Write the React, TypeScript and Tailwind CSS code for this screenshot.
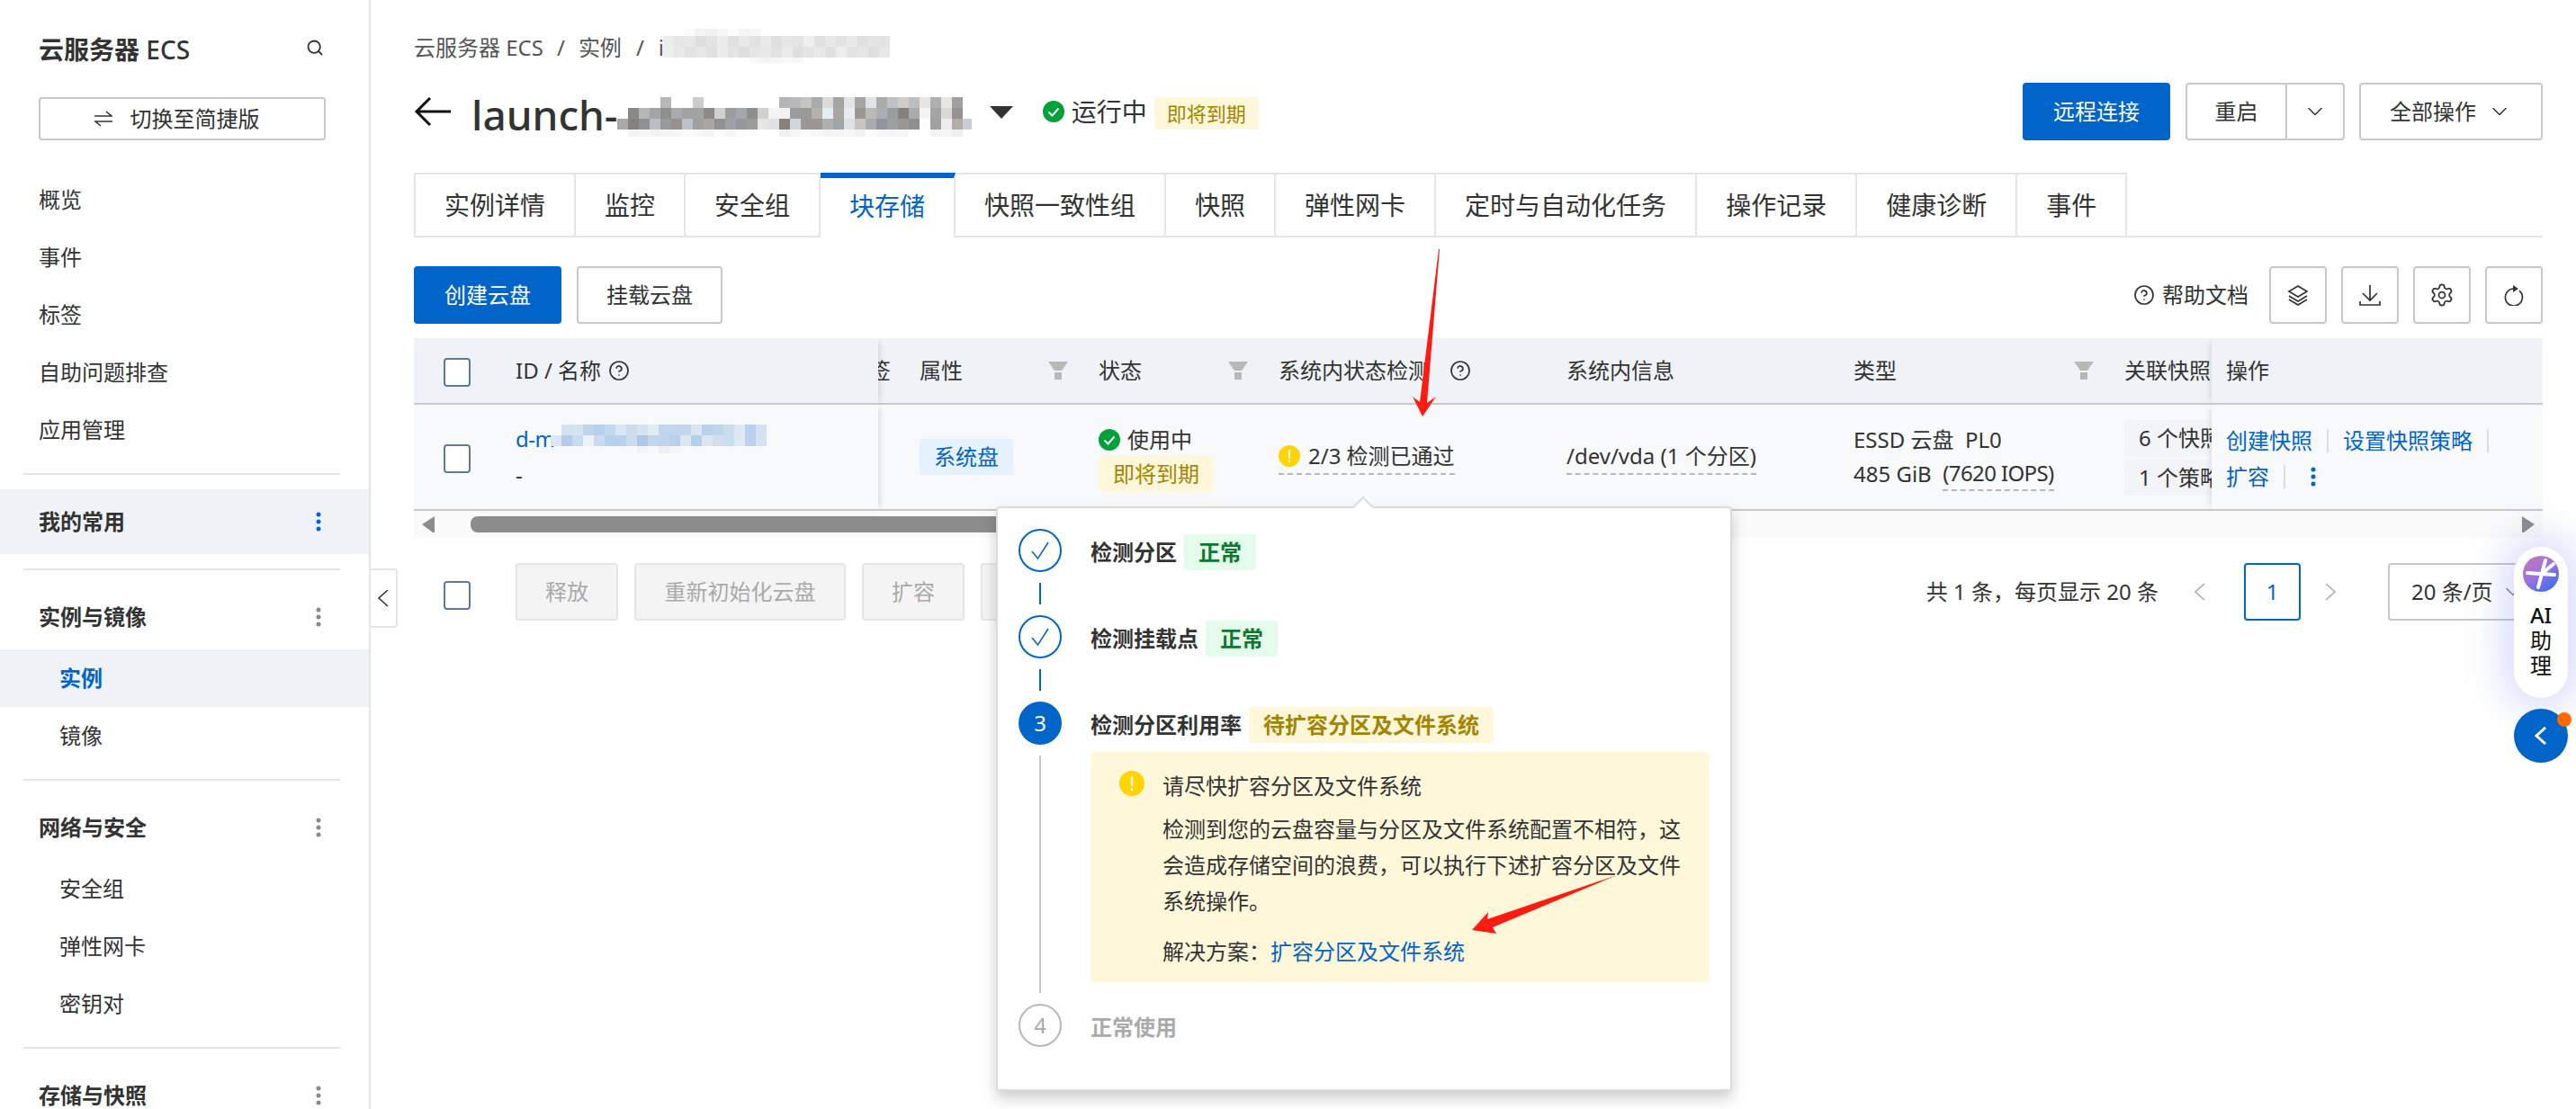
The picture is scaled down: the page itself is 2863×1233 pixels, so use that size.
import { ChevronDown, CircleHelp, Search, Settings } from "lucide-react";

type MosaicRow = { x: number; y: number; h?: number; colors: string[] };

const nav = ["概览", "事件", "标签", "自助问题排查", "应用管理"];
const tabs = ["实例详情", "监控", "安全组", "块存储", "快照一致性组", "快照", "弹性网卡", "定时与自动化任务", "操作记录", "健康诊断", "事件"];

const titleMosaic: MosaicRow[] = [
  { x: 52, y: 8, colors: ["#b8b8b8"] },
  { x: 88, y: 8, colors: ["#cccccc"] },
  { x: 184, y: 8, colors: ["#b4b4b4", "#b8b9ba", "#c6c5c2", "#a8aaac", "#dcdad8", "#a4a4a4", "#e4e4e6", "#a6a5a3", "#dfe4e8", "#acaaa8", "#bfc1c3", "#cfccc9", "#bcbec0", "#e6e6e6", "#adb0b2", "#e8e6e0", "#9f9f9f"] },
  { x: 16, y: 20, colors: ["#888888", "#b8b6b4", "#a2a4a6", "#8f8f8d", "#a8aab0", "#a3a3a3", "#a3a3a1", "#8a8a88", "#d2d0cc", "#9a9c9e", "#a2a8ac", "#8e8e8a", "#cfd1d3", "#f2f3f3", "#f3f2f2", "#9a9da0", "#9a9a9a", "#b4b0aa", "#e6ecf5", "#a9a7a3", "#e8ecf2", "#9b9792", "#bbb9b6", "#a9adb5", "#9b9c9d", "#848280", "#a9abad", "#f3f3f1", "#a3a4a5", "#dcd8d3", "#929496"] },
  { x: 4, y: 32, colors: ["#aaa8a5", "#85807c", "#8f9092", "#bbbfc3", "#979a9c", "#97928f", "#bcc2c9", "#9fa09f", "#aba6a0", "#929292", "#9da0a8", "#96999c", "#9a9c9a", "#e8e6e4", "#dfe1e4", "#86827e", "#d0d6da", "#9a9896", "#999896", "#b1afad", "#9ea5ab", "#e0e0e0", "#c8c5c0", "#a8aaad", "#9095a0", "#9ca0a4", "#9a9896", "#8f8f8f", "#fbfcfc", "#9fa09f", "#ededed", "#b1aeaa", "#c8ccd4"] },
  { x: 16, y: 44, h: 8, colors: ["#f3f3f3", "#f7f7f7", "#f2f2f2", "#f4f4f4", "#f6f6f6", "#fbfbfb", "#f8f8f8", "#f4f4f4", "#fcfcfc", "#f7f7f7", "#fbfbfb", "#fcfcfc", "#ffffff", "#ffffff", "#f0f0f0", "#f6f6f6", "#f9f9f9", "#f8f8f8", "#f3f3f3", "#f5f5f5", "#f6f6f6", "#f2f2f2", "#fcfcfc", "#f7f7f7", "#f5f5f5", "#f7f7f7", "#ffffff", "#ffffff", "#f2f2f2", "#f5f5f5", "#efefef"] },
];

const idMosaic: MosaicRow[] = [
  { x: 12, y: 0, colors: ["#d4e2f0", "#d6e4f2", "#c0d5ec", "#b8d0ea", "#c2d8ee", "#d9e6f3", "#cbdded", "#d6e4f1", "#e1eaf3", "#c1d6ec", "#c0d6ed", "#c2d7ec", "#d9e5f2", "#bbd2ea", "#bfd5ec", "#cbdded", "#dee8f3", "#b9d1eb", "#d3e2f1"] },
  { x: 0, y: 12, colors: ["#d9e6f3", "#b3cde9", "#c8dbef", "#e9f3fa", "#cbdaf0", "#b6d1ec", "#b5d0ea", "#cbdded", "#aec9e7", "#c1d6ec", "#bfd5ec", "#b8d0ea", "#dde7f2", "#b4cfea", "#dce6f2", "#d3ddee", "#c9ddf0", "#dfe8f3", "#bcd2ec", "#d4e2f1"] },
  { x: 96, y: 24, h: 8, colors: ["#f0f3f7", "#f8f9fb", "#ebf0f6", "#f3f6f8"] },
];

const crumbMosaic: MosaicRow[] = [
  { x: 24, y: 0, h: 8, colors: ["#fafafa", "#f3f3f3", "#f0f0f0", "#f6f6f6", "#fbfbfb", "#f5f5f5", "#f7f7f7"] },
  { x: 0, y: 8, colors: ["#ececec", "#e6e6e6", "#e9e9e9", "#dedede", "#e3e3e3", "#ebebeb", "#e0e0e0", "#e8e8e8", "#e2e2e2", "#eaeaea", "#dfdfdf", "#e6e6e6", "#e4e4e4", "#eeeeee", "#e1e1e1", "#e7e7e7", "#e3e3e3", "#e9e9e9", "#e0e0e0", "#e5e5e5", "#e3e3e3"] },
  { x: 0, y: 20, colors: ["#eeeeee", "#e9e9e9", "#e2e2e2", "#e7e7e7", "#e0e0e0", "#ececec", "#e4e4e4", "#dddddd", "#e6e6e6", "#e8e8e8", "#e2e2e2", "#ebebeb", "#dfdfdf", "#e5e5e5", "#e9e9e9", "#e1e1e1", "#ededed", "#e3e3e3", "#e6e6e6", "#dedede", "#e8e8e8"] },
  { x: 96, y: 32, h: 6, colors: ["#f8f8f8", "#f4f4f4", "#f6f6f6", "#f9f9f9", "#f7f7f7"] },
];

const Mosaic = ({ rows, width, height }: { rows: MosaicRow[]; width: number; height: number }) => (
  <svg width={width} height={height} viewBox={`0 0 ${width} ${height}`} className="shrink-0">
    {rows.map((row) =>
      row.colors.map((c, i) => <rect key={`${row.y}-${row.x}-${i}`} x={row.x + i * 12} y={row.y} width="12" height={row.h ?? 12} fill={c} />)
    )}
  </svg>
);

const Dots = ({ color }: { color: string }) => (
  <svg width="6" height="22" viewBox="0 0 6 22" fill={color}>
    <circle cx="3" cy="3" r="2.5" />
    <circle cx="3" cy="11" r="2.5" />
    <circle cx="3" cy="19" r="2.5" />
  </svg>
);

// thin angle used by the sidebar handle, the pager and the round button
const Angle = ({ dir, color, stroke = 1.6 }: { dir: "left" | "right"; color: string; stroke?: number }) => (
  <svg width="14" height="20" viewBox="0 0 14 20" fill="none" stroke={color} strokeWidth={stroke} className="shrink-0">
    <path d={dir === "left" ? "M12 1L2 10L12 19" : "M2 1L12 10L2 19"} />
  </svg>
);

const Sep = () => <div className="my-4 ml-[26px] h-[2px] w-[352px] bg-[#e5e5e5]" />;

const Group = ({ title, items, active, hl }: { title: string; items?: string[]; active?: string; hl?: boolean }) => (
  <div>
    <div className={`flex h-[72px] items-center justify-between pl-[43px] pr-[53px] font-bold ${hl ? "bg-[#eff3f8]" : ""}`}>
      <span>{title}</span>
      <Dots color={hl ? "#0064c8" : "#8a8a8a"} />
    </div>
    {items?.map((it) => (
      <div key={it} className={`flex h-16 items-center pl-[66px] ${it === active ? "bg-[#eff3f8] font-bold text-[#0064c8]" : ""}`}>
        {it}
      </div>
    ))}
  </div>
);

const Sidebar = () => (
  <aside className="h-full w-[412px] shrink-0 overflow-hidden border-r-2 border-[#e5e5e5] pt-[19px] text-[24px] text-[#333]">
    <div className="flex h-[72px] items-center justify-between pl-[43px] pr-[50px]">
      <span className="text-[28px] font-bold">云服务器 <span className="font-medium">ECS</span></span>
      <Search size={20} strokeWidth={2.2} className="-mt-[4px]" />
    </div>
    <div className="ml-[43px] mt-[17px] flex h-12 w-[319px] items-center justify-center gap-5 rounded border-2 border-[#c8c8c8] pr-3">
      <svg width="20" height="18" viewBox="0 0 20 18" fill="none" stroke="#333" strokeWidth="1.6">
        <path d="M0 6H19L13 1" />
        <path d="M20 12H1L7 17" />
      </svg>
      切换至简捷版
    </div>
    <div className="mt-[34px]">
      {nav.map((n) => (
        <div key={n} className="flex h-16 items-center pl-[43px]">{n}</div>
      ))}
    </div>
    <Sep />
    <Group title="我的常用" hl />
    <Sep />
    <Group title="实例与镜像" items={["实例", "镜像"]} active="实例" />
    <Sep />
    <Group title="网络与安全" items={["安全组", "弹性网卡", "密钥对"]} />
    <Sep />
    <Group title="存储与快照" />
  </aside>
);

const OkIcon = () => (
  <svg width="24" height="24" viewBox="0 0 24 24" className="shrink-0">
    <circle cx="12" cy="12" r="12" fill="#00a13a" />
    <path d="M6.5 12.5L10.5 16.5L17.5 8.5" fill="none" stroke="#fff" strokeWidth="2" />
  </svg>
);

const WarnIcon = ({ size }: { size: number }) => (
  <svg width={size} height={size} viewBox="0 0 24 24" className="shrink-0">
    <circle cx="12" cy="12" r="12" fill="#ffd400" />
    <rect x="11" y="5" width="2" height="9.5" fill="#fff" />
    <rect x="11" y="16.5" width="2" height="2.5" fill="#fff" />
  </svg>
);

const Filter = () => (
  <svg width="22" height="20" viewBox="0 0 22 20" fill="#b8b8b8" className="shrink-0">
    <path d="M0 0H22L15 10H7Z" />
    <rect x="7" y="12" width="8" height="8" />
  </svg>
);

const Checkbox = ({ className }: { className?: string }) => (
  <div className={`h-8 w-[30px] shrink-0 rounded border-2 border-[#5b7a9d] bg-white ${className ?? ""}`} />
);

const HeadCell = ({ children, filter }: { children: React.ReactNode; filter?: boolean }) => (
  <div className="flex h-[74px] items-center whitespace-nowrap border-b-2 border-[#c8c8c8] bg-[#eff3f8] pl-4">
    <span>{children}</span>
    {filter && <span className="ml-auto mr-[18px]"><Filter /></span>}
  </div>
);

const BodyCell = ({ className, children }: { className?: string; children?: React.ReactNode }) => (
  <div className={`h-[118px] border-b-2 border-[#c8c8c8] bg-[#f7f9fb] pl-4 ${className ?? ""}`}>{children}</div>
);

const Divider = () => <span className="inline-block h-[26px] w-[2px] bg-[#dcdcdc]" />;

const Table = () => (
  <div className="mt-4">
    <div className="grid grid-cols-[516px_30px_199px_200px_320px_319px_301px_113px_368px] text-[24px] text-[#333]">
      <div className="relative z-10 flex h-[74px] items-center border-b-2 border-[#c8c8c8] bg-[#eff3f8] pl-[33px] shadow-[6px_0_6px_-4px_rgba(0,0,0,0.12)]">
        <Checkbox className="mt-1" />
        <span className="ml-[50px] flex items-center gap-2">ID / 名称 <CircleHelp size={24} strokeWidth={1.7} /></span>
      </div>
      <div className="flex h-[74px] items-center justify-end overflow-hidden border-b-2 border-[#c8c8c8] bg-[#eff3f8] pr-[16px]">
        <span className="whitespace-nowrap">标签</span>
      </div>
      <HeadCell filter>属性</HeadCell>
      <HeadCell filter>状态</HeadCell>
      <HeadCell>
        <span className="flex items-center gap-[22px]">系统内状态检测 <CircleHelp size={24} strokeWidth={1.7} /></span>
      </HeadCell>
      <HeadCell>系统内信息</HeadCell>
      <HeadCell filter>类型</HeadCell>
      <div className="h-[74px] overflow-hidden"><HeadCell>关联快照</HeadCell></div>
      <div className="relative z-10 flex h-[74px] items-center border-b-2 border-[#c8c8c8] bg-[#eff3f8] pl-4 shadow-[-6px_0_6px_-4px_rgba(0,0,0,0.1)]">操作</div>

      <div className="relative z-10 flex h-[118px] items-center border-b-2 border-[#c8c8c8] bg-[#f7f9fb] pl-[33px] shadow-[6px_0_6px_-4px_rgba(0,0,0,0.12)]">
        <Checkbox className="mt-1" />
        <div className="ml-[50px]">
          <div className="flex h-10 items-center text-[#0064c8]">
            <span className="w-[39px] shrink-0 whitespace-nowrap tracking-[-0.5px]">d-m</span>
            <Mosaic rows={idMosaic} width={240} height={32} />
          </div>
          <div className="flex h-10 items-center">-</div>
        </div>
      </div>
      <BodyCell />
      <BodyCell className="flex items-center">
        <span className="flex h-10 items-center rounded bg-[#e6f2fd] px-4 text-[#0064c8]">系统盘</span>
      </BodyCell>
      <BodyCell className="pt-[27px]">
        <div className="flex h-6 items-center gap-2"><OkIcon />使用中</div>
        <span className="mt-[6px] flex h-10 w-fit items-center rounded bg-[#fff7d9] px-4 text-[#a58400]">即将到期</span>
      </BodyCell>
      <BodyCell className="flex items-center">
        <span className="flex h-10 items-center gap-[9px] whitespace-nowrap border-b-2 border-dashed border-[#b8b8b8]"><WarnIcon size={24} />2/3 检测已通过</span>
      </BodyCell>
      <BodyCell className="flex items-center">
        <span className="flex h-10 items-center whitespace-nowrap border-b-2 border-dashed border-[#b8b8b8]">/dev/vda (1 个分区)</span>
      </BodyCell>
      <BodyCell className="pt-5">
        <div className="flex h-[38px] items-center whitespace-pre">ESSD 云盘  PL0</div>
        <div className="flex h-[38px] items-center whitespace-pre">485 GiB  <span className="flex h-[38px] items-center border-b-2 border-dashed border-[#b8b8b8] tracking-[-0.6px]">(7620 IOPS)</span></div>
      </BodyCell>
      <BodyCell className="overflow-hidden pt-[17px]">
        <div className="flex h-10 w-[140px] items-center rounded bg-[#f2f4f7] px-4 whitespace-nowrap">6 个快照</div>
        <div className="mt-1 flex h-10 w-[140px] items-center rounded bg-[#f2f4f7] px-4 whitespace-nowrap">1 个策略</div>
      </BodyCell>
      <div className="relative z-10 h-[118px] border-b-2 border-[#c8c8c8] bg-[#f7f9fb] pl-4 pt-5 text-[#0064c8] shadow-[-6px_0_6px_-4px_rgba(0,0,0,0.1)]">
        <div className="flex h-10 items-center gap-4">创建快照 <Divider /> 设置快照策略 <Divider /></div>
        <div className="flex h-10 items-center gap-4">扩容 <Divider /><span className="ml-3"><Dots color="#0064c8" /></span></div>
      </div>
    </div>
    <div className="flex h-[30px] items-center bg-[#fafafa] px-[9px]">
      <svg width="14" height="18" viewBox="0 0 14 18" fill="#8c8c8c"><path d="M14 0V18H12L0 9Z" /></svg>
      <div className="ml-[40px] h-[18px] w-[900px] rounded-l-lg bg-[#8c8c8c]" />
      <svg width="14" height="18" viewBox="0 0 14 18" fill="#8c8c8c" className="ml-auto"><path d="M0 0V18H2L14 9Z" /></svg>
    </div>
  </div>
);

const BatchBtn = ({ children, width }: { children?: React.ReactNode; width: string }) => (
  <div className={`flex h-16 items-center justify-center rounded border-2 border-[#e5e5e5] bg-[#f4f4f4] text-[#aaa] ${width}`}>{children}</div>
);

const IconBtn = ({ children }: { children: React.ReactNode }) => (
  <div className="flex h-16 w-16 items-center justify-center rounded border-2 border-[#c8c8c8]">{children}</div>
);

const OutlineBtn = ({ children, className }: { children: React.ReactNode; className?: string }) => (
  <div className={`flex h-16 items-center justify-center rounded border-2 border-[#c8c8c8] ${className ?? ""}`}>{children}</div>
);

const StepDone = () => (
  <div className="flex h-12 w-12 items-center justify-center rounded-full border-2 border-[#0064c8]">
    <svg width="24" height="24" viewBox="0 0 24 24" fill="none" stroke="#0064c8" strokeWidth="1.5"><path d="M3 13L9.5 21L21 3" /></svg>
  </div>
);

const Tag = ({ children, tone }: { children: React.ReactNode; tone: "green" | "yellow" }) => (
  <span className={`ml-2 flex h-10 items-center rounded px-4 font-bold ${tone === "green" ? "bg-[#e5fbec] text-[#0a7a2f]" : "bg-[#fff7d9] text-[#a58400]"}`}>{children}</span>
);

const Popover = () => (
  <div className="absolute left-[1107px] top-[563px] z-30 h-[650px] w-[818px] rounded-sm border-2 border-[#dcdcdc] bg-white pl-[23px] pt-[23px] text-[24px] text-[#333] shadow-[0_8px_16px_rgba(0,0,0,0.2)]">
    <div className="absolute -top-[10px] left-[398px] h-4 w-4 rotate-45 border-l-2 border-t-2 border-[#dcdcdc] bg-white" />
    <div className="flex gap-8 pb-3">
      <div className="flex w-12 flex-col items-center"><StepDone /><div className="mt-3 h-6 w-[2px] bg-[#0064c8]" /></div>
      <div className="mt-[2px] flex h-12 items-center font-bold">检测分区<Tag tone="green">正常</Tag></div>
    </div>
    <div className="flex gap-8 pb-3">
      <div className="flex w-12 flex-col items-center"><StepDone /><div className="mt-3 h-6 w-[2px] bg-[#0064c8]" /></div>
      <div className="mt-[2px] flex h-12 items-center font-bold">检测挂载点<Tag tone="green">正常</Tag></div>
    </div>
    <div className="flex gap-8">
      <div className="flex w-12 flex-col items-center">
        <div className="flex h-12 w-12 items-center justify-center rounded-full bg-[#0064c8] text-white">3</div>
        <div className="my-3 w-[2px] flex-1 bg-[#c8c8c8]" />
      </div>
      <div className="pb-6">
        <div className="mt-[2px] flex h-12 items-center font-bold">检测分区利用率<Tag tone="yellow">待扩容分区及文件系统</Tag></div>
        <div className="mt-[6px] flex h-[256px] w-[688px] gap-5 rounded bg-[#fff7d9] pl-8 pr-[30px] pt-[18px] leading-10">
          <div className="mt-[3px]"><WarnIcon size={28} /></div>
          <div>
            <div>请尽快扩容分区及文件系统</div>
            <p className="mt-2">检测到您的云盘容量与分区及文件系统配置不相符，这会造成存储空间的浪费，可以执行下述扩容分区及文件系统操作。</p>
            <div className="mt-4">解决方案：<span className="text-[#0064c8]">扩容分区及文件系统</span></div>
          </div>
        </div>
      </div>
    </div>
    <div className="flex gap-8">
      <div className="flex h-12 w-12 items-center justify-center rounded-full border-2 border-[#b8b8b8] text-[#aaa]">4</div>
      <div className="mt-[2px] flex h-12 items-center font-bold text-[#aaa]">正常使用</div>
    </div>
  </div>
);

const AiAssistant = () => (
  <div className="absolute left-[2794px] top-[608px] z-40 flex w-[60px] flex-col items-center gap-3">
    <div className="flex h-[168px] w-[60px] flex-col items-center rounded-full bg-white pt-[10px] text-[24px] leading-[28px] text-[#111] shadow-[0_0_40px_14px_rgba(90,110,230,0.22)]">
      <svg width="40" height="40" viewBox="0 0 40 40" className="shrink-0">
        <defs>
          <linearGradient id="ai" x1="0.1" y1="0" x2="0.8" y2="1">
            <stop offset="0" stopColor="#c878b8" />
            <stop offset="0.5" stopColor="#9a72e0" />
            <stop offset="1" stopColor="#3a6cf5" />
          </linearGradient>
        </defs>
        <circle cx="20" cy="20" r="20" fill="url(#ai)" />
        <path d="M5 19L35 21M25 5L17 35M21 20L34 9" stroke="#fff" strokeWidth="4" strokeLinecap="round" />
      </svg>
      <span className="mt-[12px] font-medium">AI</span>
      <span>助</span>
      <span>理</span>
    </div>
    <div className="relative flex h-[60px] w-[60px] items-center justify-center rounded-full bg-[#0064c8]">
      <Angle dir="left" color="#fff" stroke={3} />
      <span className="absolute left-[48px] top-[4px] h-4 w-4 rounded-full bg-[#ff6a00]" />
    </div>
  </div>
);

const Arrows = () => (
  <svg className="pointer-events-none absolute left-0 top-0 z-50" width="2863" height="1233" viewBox="0 0 2863 1233" fill="#ff1a12">
    <polygon points="1600,277 1586,448 1596,441 1581,463 1570,441 1578,447 1599,277" />
    <polygon points="1797,973 1659,1031 1663,1038 1636,1034 1654,1014 1653,1022" />
  </svg>
);

export default function App() {
  return (
    <div className="relative flex h-[1233px] w-[2863px] overflow-hidden bg-white font-['Noto_Sans','Noto_Sans_CJK_SC',sans-serif] text-[24px] text-[#333]">
      <Sidebar />
      <button className="absolute left-[412px] top-[632px] z-20 flex h-[66px] w-[30px] items-center justify-center rounded-r border-2 border-l-0 border-[#e5e5e5] bg-white">
        <Angle dir="left" color="#333" />
      </button>

      <main className="min-w-0 flex-1 pl-[48px] pr-[37px] pt-[35px]">
        <div className="flex h-9 items-center text-[#555]">
          <span>云服务器 ECS</span>
          <span className="mx-[15px]">/</span>
          <span>实例</span>
          <span className="mx-4">/</span>
          <span>i-</span>
          <div className="-ml-[9px] -mt-1"><Mosaic rows={crumbMosaic} width={256} height={38} /></div>
        </div>

        <div className="mt-[21px] flex h-16 items-center">
          <svg width="42" height="34" viewBox="0 0 42 34" fill="none" stroke="#111" strokeWidth="3" className="shrink-0">
            <path d="M41 17H3M18 2L3 17L18 32" />
          </svg>
          <span className="ml-[22px] mt-[6px] text-[46px] font-medium leading-none text-[#333]">launch-</span>
          <div className="-ml-[5px] mt-[8px]"><Mosaic rows={titleMosaic} width={398} height={56} /></div>
          <svg width="26" height="14" viewBox="0 0 26 14" fill="#333" className="ml-[20px] mt-[2px] shrink-0"><path d="M0 0H26L13 14Z" /></svg>
          <span className="ml-[33px]"><OkIcon /></span>
          <span className="ml-2 text-[28px]">运行中</span>
          <span className="ml-2 mt-1 flex h-9 items-center rounded bg-[#fff7d9] px-[14px] text-[22px] text-[#a58400]">即将到期</span>
          <div className="ml-auto flex items-center">
            <div className="flex h-16 w-[164px] items-center justify-center rounded bg-[#0064c8] text-white">远程连接</div>
            <div className="ml-[17px] flex h-16 w-[177px] rounded border-2 border-[#c8c8c8]">
              <span className="flex flex-1 items-center justify-center border-r-2 border-[#c8c8c8]">重启</span>
              <span className="flex w-[62px] items-center justify-center"><ChevronDown size={28} strokeWidth={1.3} /></span>
            </div>
            <OutlineBtn className="ml-4 w-[204px] gap-3">全部操作 <ChevronDown size={28} strokeWidth={1.3} /></OutlineBtn>
          </div>
        </div>

        <div className="mt-[36px] flex h-[72px] border-b-2 border-[#e5e5e5] text-[28px]">
          {tabs.map((t, i) =>
            t === "块存储" ? (
              <div key={i} className="z-10 flex h-[72px] items-center border-r-2 border-t-[6px] border-r-[#e5e5e5] border-t-[#0064c8] bg-white px-8 pb-1 text-[#0064c8]">{t}</div>
            ) : (
              <div key={i} className={`flex h-[70px] items-center border-r-2 border-t-2 border-[#e5e5e5] px-8 ${i === 0 ? "border-l-2" : ""}`}>{t}</div>
            )
          )}
        </div>

        <div className="mt-8 flex h-16 items-center">
          <div className="flex h-16 w-[164px] items-center justify-center rounded bg-[#0064c8] text-white">创建云盘</div>
          <OutlineBtn className="ml-[17px] w-[162px]">挂载云盘</OutlineBtn>
          <div className="ml-auto flex items-center gap-4">
            <span className="mr-[7px] flex items-center gap-2"><CircleHelp size={24} strokeWidth={1.7} />帮助文档</span>
            <IconBtn>
              <svg width="24" height="24" viewBox="0 0 24 24" fill="none" stroke="#333" strokeWidth="1.7">
                <path d="M12 2L22 8L12 14L2 8Z" />
                <path d="M2 13L12 19L22 13M2 17L12 23L22 17" />
              </svg>
            </IconBtn>
            <IconBtn>
              <svg width="24" height="24" viewBox="0 0 24 24" fill="none" stroke="#333" strokeWidth="1.7">
                <path d="M12 1V18M4 10L12 18L20 10M1 19V23H23V19" />
              </svg>
            </IconBtn>
            <IconBtn><Settings size={28} strokeWidth={1.5} /></IconBtn>
            <IconBtn>
              <svg width="24" height="24" viewBox="0 0 24 24" fill="none" stroke="#333" strokeWidth="1.7">
                <path d="M12 5A9.5 9.5 0 1 0 18 7.2" />
                <path d="M11 1L17 5L11 9Z" fill="#333" stroke="none" />
              </svg>
            </IconBtn>
          </div>
        </div>

        <Table />

        <div className="mt-[28px] flex h-16 items-center pl-[33px]">
          <Checkbox className="mt-2" />
          <div className="ml-[50px] flex gap-[18px]">
            <BatchBtn width="w-[114px]">释放</BatchBtn>
            <BatchBtn width="w-[235px]">重新初始化云盘</BatchBtn>
            <BatchBtn width="w-[114px]">扩容</BatchBtn>
            <BatchBtn width="w-[114px]" />
          </div>
          <div className="ml-auto flex items-center">
            <span>共 1 条，每页显示 20 条</span>
            <span className="ml-[39px]"><Angle dir="left" color="#aaa" /></span>
            <div className="ml-[42px] flex h-16 w-[63px] items-center justify-center rounded border-2 border-[#0064c8] text-[#0064c8]">1</div>
            <span className="ml-[26px]"><Angle dir="right" color="#aaa" /></span>
            <OutlineBtn className="ml-[57px] w-[172px] justify-start gap-2 pl-[24px]">20 条/页 <ChevronDown size={28} strokeWidth={1.4} color="#888" /></OutlineBtn>
          </div>
        </div>
      </main>

      <Popover />
      <AiAssistant />
      <Arrows />
    </div>
  );
}
